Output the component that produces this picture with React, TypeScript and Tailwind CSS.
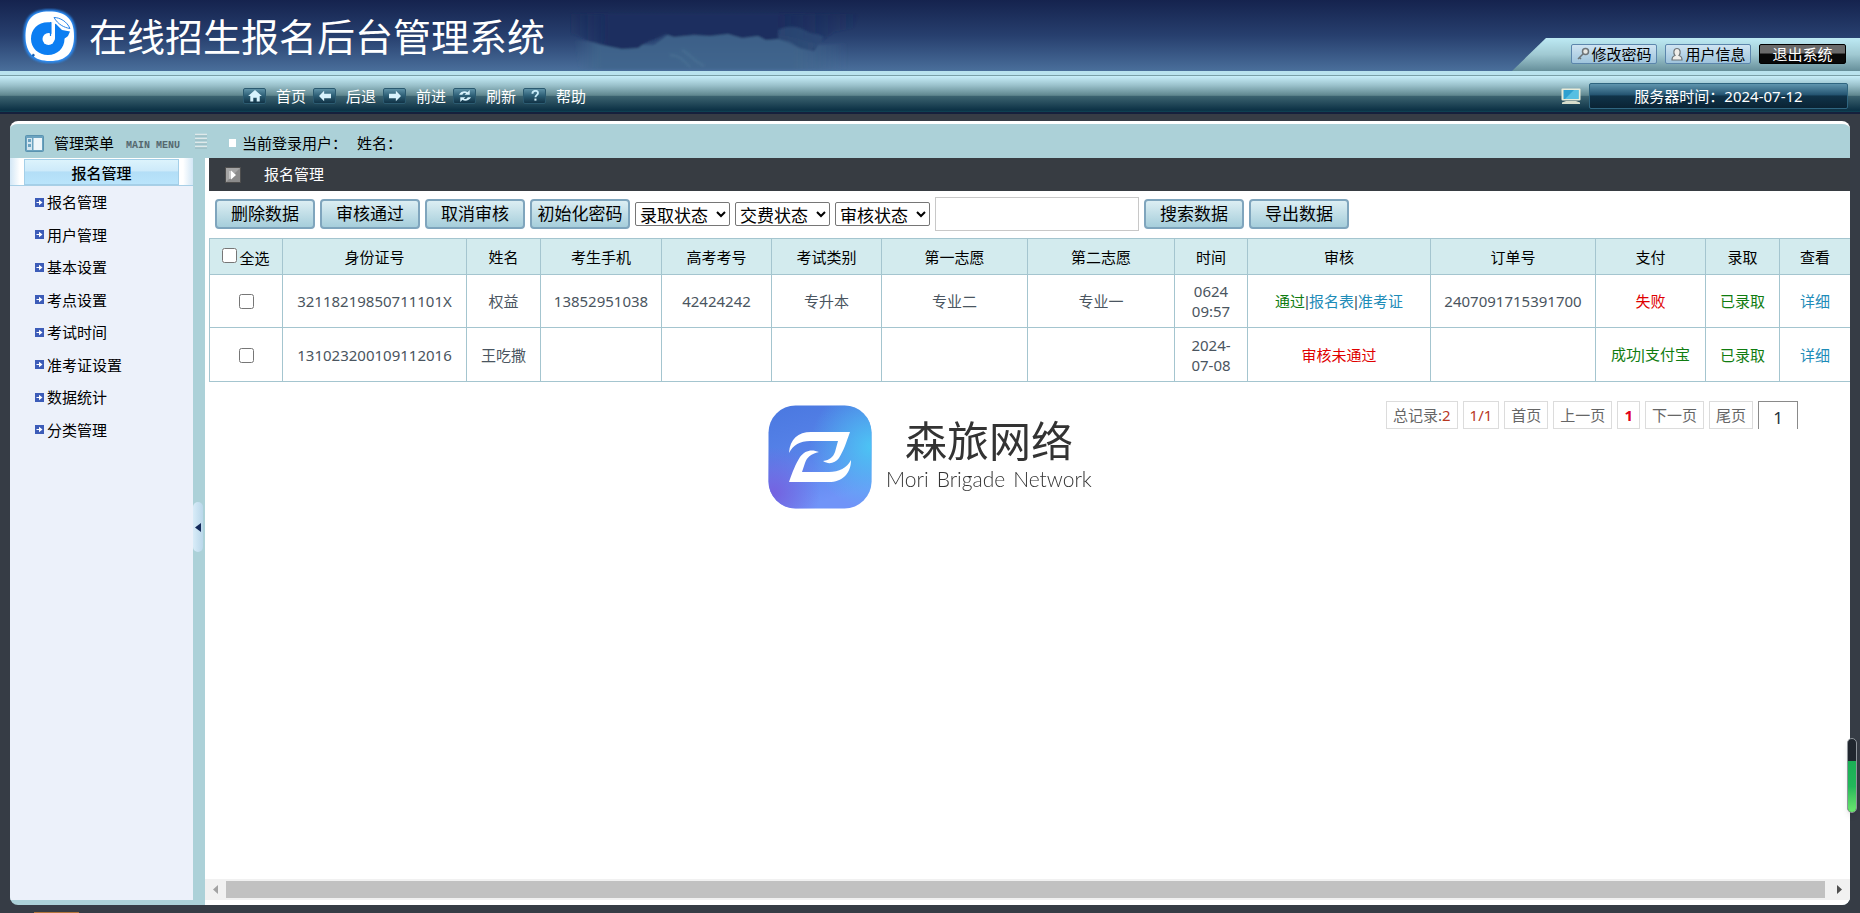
import React from 'react';

const navItems = [
  { label: '首页', icon: 'home' },
  { label: '后退', icon: 'back' },
  { label: '前进', icon: 'forward' },
  { label: '刷新', icon: 'refresh' },
  { label: '帮助', icon: 'help' },
];

const menuItems = ['报名管理', '用户管理', '基本设置', '考点设置', '考试时间', '准考证设置', '数据统计', '分类管理'];

function Logo() {
  return (
    <svg viewBox="0 0 56 56" className="size-14 shrink-0" aria-hidden="true">
      <defs>
        <filter id="logoGlow" x="-10%" y="-10%" width="120%" height="120%">
          <feGaussianBlur stdDeviation="0.8" />
        </filter>
      </defs>
      <path d="M28 1.500C46 1.500 55 9 55 28S46 55 29 55C11 55 2.500 46 2.500 28S10 1.500 28 1.500z" fill="#2a8cf5" filter="url(#logoGlow)" />
      <path d="M28 3.500C45 3.500 53 11 53 28S45 53 29 53C13 53 4.500 45 4.500 28S12 3.500 28 3.500z" fill="#fff" />
      <path d="M30 14.500C18 13 10 20.500 10 31c0 9 7.500 16 17 16s16.500-7 16.500-16c0-1 2-1.500 3.500-3l2-4.500-8-1.500-6-6z" fill="#0c7ef2" />
      <circle cx="27.500" cy="31" r="6" fill="#fff" />
      <path d="M30.500 15h3.500v15a4.500 4.500 0 0 1-3.500 4z" fill="#fff" />
      <path d="M29.500 14v14" stroke="#0c7ef2" strokeWidth="1.200" />
      <path d="M33 9.500c6 0 13 4 16 11-6-1-12-4-16-11z" fill="#fff" stroke="#2a86ea" strokeWidth="1" />
      <path d="M12 45.500l2 1.500-1.500 2-1.800-1.500z" fill="#1160b8" />
    </svg>
  );
}

function Clouds() {
  return (
    <svg viewBox="0 0 300 71" className="absolute left-[570px] top-0 h-[71px] w-[300px]" aria-hidden="true">
      <defs>
        <linearGradient id="cloudLight" x1="0" y1="0" x2="1" y2="0">
          <stop offset="0" stopColor="#41668c" stopOpacity="0" />
          <stop offset="0.100" stopColor="#41668c" stopOpacity="0.850" />
          <stop offset="0.800" stopColor="#41668c" stopOpacity="0.850" />
          <stop offset="1" stopColor="#41668c" stopOpacity="0" />
        </linearGradient>
        <linearGradient id="cloudDark" x1="0" y1="0" x2="1" y2="0">
          <stop offset="0" stopColor="#1b2d5e" stopOpacity="0" />
          <stop offset="0.160" stopColor="#1b2d5e" />
          <stop offset="0.720" stopColor="#1b2d5e" />
          <stop offset="1" stopColor="#1b2d5e" stopOpacity="0" />
        </linearGradient>
        <filter id="cloudSoft" x="-10%" y="-10%" width="120%" height="120%">
          <feGaussianBlur stdDeviation="0.8" />
        </filter>
      </defs>
      <g filter="url(#cloudSoft)">
        <path d="M4 40l20 2 20 3 40 0 16-12h100l20 4 30 8 28-2v26H10z" fill="url(#cloudLight)" />
        <path d="M0 14H290l-6 14-20 4-14 10-6 9-14-3-10-6-12-3-12 1-8-4-16 2-14-4-18 2-16-1-20 2-9-3-8 4-12 5-7 5-16 1-20-4-14-4-12-6-14-4z" fill="url(#cloudDark)" />
        <path d="M208 30c10-5 20-4 28 1 6 4 12 2 18 6-4 6-8 10-12 13-12 0-24-6-34-11z" fill="#35557f" opacity="0.550" />
        <path d="M100 55c10 0 14 6 20 12M112 50c8 4 10 10 22 16" stroke="#527a9d" strokeWidth="2" fill="none" opacity="0.400" />
      </g>
    </svg>
  );
}

function NavIcon({ name }: { name: string }) {
  return (
    <span className="flex h-4 w-[23px] items-center justify-center rounded-xs border border-[#2b5a70] bg-linear-to-b from-[#5f93a8] via-[#2a5c73] to-[#123447]">
      <svg viewBox="0 0 16 14" className="h-3 w-3.5" fill="#d8f2fc" aria-hidden="true">
        {name === 'home' && <path d="M8 0L0 7h2.500v6.500H6V9h4v4.500h3.500V7H16z" />}
        {name === 'back' && <path d="M1 7l6-6v3.500h8v5H7V13z" />}
        {name === 'forward' && <path d="M15 7L9 1v3.500H1v5h8V13z" />}
        {name === 'refresh' && (
          <path d="M1 5.500C3 1.500 8 .5 11 2.500L13.500 0v5.500H7.500l1.800-1.700C7 3 5.500 3.800 5 5.500zM15 8.500c-2 4-7 5-10 3L2.500 14V8.500h6l-1.800 1.700c2.300.8 3.800 0 4.300-1.700z" />
        )}
        {name === 'help' && (
          <g>
            <path d="M5 4.500c0-4.500 6.500-4.500 6.500-1 0 2.500-3 2.500-3 5" fill="none" stroke="#c8ecfa" strokeWidth="2.200" />
            <rect x="7.300" y="10" width="2.400" height="2.400" />
          </g>
        )}
      </svg>
    </span>
  );
}

function Header() {
  return (
    <header>
      <div className="relative flex h-[71px] items-end justify-between bg-linear-to-b from-[#15234e] via-[#273f6e] to-[#4a6f9b]">
        <Clouds />
        <div className="relative flex h-full items-center gap-3 pl-[21px]">
          <Logo />
          <h1 className="text-[38px] leading-none text-white">在线招生报名后台管理系统</h1>
        </div>
        <div className="relative flex">
          <svg viewBox="0 0 34 33" className="h-[33px] w-[34px]" aria-hidden="true">
            <defs>
              <linearGradient id="tab" x1="0" y1="0" x2="0" y2="1">
                <stop offset="0" stopColor="#bdeaf4" />
                <stop offset="0.5" stopColor="#a0c9d2" />
                <stop offset="1" stopColor="#668f9a" />
              </linearGradient>
            </defs>
            <path d="M0 33L34 0v33z" fill="url(#tab)" />
          </svg>
          <div className="flex h-[33px] items-start gap-2 bg-linear-to-b from-[#bdeaf4] via-[#a0c9d2] to-[#668f9a] pl-[25px] pr-3.5 pt-1.5">
            <button className="flex h-5 w-[86px] items-center justify-center gap-px rounded-xs border border-[#5c86ac] bg-linear-to-b from-[#cfe4f2] to-[#9fc4dc] text-[15px] leading-none text-black">
              <svg viewBox="0 0 14 14" className="size-3.5" fill="none" stroke="#6d7478" strokeWidth="1.500" aria-hidden="true">
                <circle cx="9.500" cy="4.500" r="3" fill="#e8e8e4" />
                <path d="M7 7L2 12M3.500 10.500l1.500 1.500" />
              </svg>
              修改密码
            </button>
            <button className="flex h-5 w-[86px] items-center justify-center gap-px rounded-xs border border-[#5c86ac] bg-linear-to-b from-[#cfe4f2] to-[#9fc4dc] text-[15px] leading-none text-black">
              <svg viewBox="0 0 14 14" className="size-3.5" fill="#f0eeea" stroke="#6d7478" strokeWidth="1.200" aria-hidden="true">
                <path d="M2 13c0-3 1-4 3-4.500C3 6 3.500 1.500 7 1.500s4 4.500 2 7c2 .5 3 1.500 3 4.500z" />
              </svg>
              用户信息
            </button>
            <button className="flex h-5 w-[87px] items-center justify-center rounded-xs border border-black bg-linear-to-b from-[#6a6a6a] from-45% to-[#080808] to-50% text-[15px] leading-none text-white">
              退出系统
            </button>
          </div>
        </div>
      </div>
      <div className="h-[5px] border-b border-[#7aa0a8] bg-[#b9e3ee]" />
      <div className="flex h-[38px] items-center justify-between border-b-2 border-[#15203c] bg-[linear-gradient(to_bottom,#c8effa_0%,#9cc3cd_25%,#5f868e_54%,#3d6471_55%,#0c3145_95%,#0f4556_100%)] pl-[243px] pr-3 pt-1">
        <nav className="flex gap-[7px] text-[15px] leading-5 text-white">
          {navItems.map((n) => (
            <a key={n.label} href="#" className="flex items-center gap-2.5">
              <NavIcon name={n.icon} />
              {n.label}
            </a>
          ))}
        </nav>
        <div className="flex items-center gap-2">
          <svg viewBox="0 0 20 16" className="h-4 w-5" aria-hidden="true">
            <rect x="0.500" y="0.500" width="19" height="12" rx="1" fill="#e9ecd9" />
            <rect x="2.500" y="2" width="15" height="9" fill="#2fa0d0" />
            <path d="M4 11l9-9h4.500v9z" fill="#57bfe2" />
            <path d="M5 13h10l4 1.500V16H1v-1.500z" fill="#d7dccb" />
          </svg>
          <div className="flex h-[26px] w-[259px] items-center justify-center rounded-xs border border-[#2f6580] bg-[linear-gradient(to_bottom,#5f95ae_0%,#245471_45%,#103349_50%,#0a2334_100%)] text-[15px] text-white">
            服务器时间：2024-07-12
          </div>
        </div>
      </div>
    </header>
  );
}

function Sidebar() {
  return (
    <aside className="flex w-[183px] shrink-0 flex-col bg-[#ecf1fa]">
      <div className="flex h-7 border-b border-[#a8cfe6] bg-[linear-gradient(to_right,#d3e7f6_0px,#ffffff_10px,#ffffff_173px,#d3e7f6_183px)] px-3.5 pt-px">
        <h2 className="flex-1 border border-[#a4cfe8] bg-[linear-gradient(to_bottom,#dcf3fc_0%,#cdeafa_45%,#b3def7_50%,#b9e4fb_100%)] text-center text-[15px] font-medium leading-[26px] text-black">
          报名管理
        </h2>
      </div>
      <ul className="grid h-[260px] grid-rows-8 pl-[25px] text-[15px] text-black">
        {menuItems.map((m) => (
          <li key={m} className="flex items-center">
            <a href="#" className="flex items-center gap-[3px]">
              <svg viewBox="0 0 9 9" className="size-[9px]" aria-hidden="true">
                <rect width="9" height="9" fill="#3c5cb8" />
                <path d="M1.500 4h2.500V1.800L7.500 4.500 4 7.200V5H1.500z" fill="#fff" />
              </svg>
              {m}
            </a>
          </li>
        ))}
      </ul>
    </aside>
  );
}

function ToolButton({ children }: { children: React.ReactNode }) {
  return (
    <button className="h-[30px] w-[100px] whitespace-nowrap rounded-[4px] border-2 border-[#7fa5bd] bg-linear-to-b from-[#dceef3] to-[#a6cedb] text-[17px] leading-none text-black">
      {children}
    </button>
  );
}

function StatusSelect({ label }: { label: string }) {
  return (
    <select aria-label={label} className="h-6 w-[95px] rounded-xs border border-[#767676] bg-white text-[17px] leading-none text-black">
      <option>{label}</option>
    </select>
  );
}

function Toolbar() {
  return (
    <div className="flex h-[47px] items-center gap-[5px] pb-1.5 pl-1.5 pt-1">
      <ToolButton>删除数据</ToolButton>
      <ToolButton>审核通过</ToolButton>
      <ToolButton>取消审核</ToolButton>
      <ToolButton>初始化密码</ToolButton>
      <StatusSelect label="录取状态" />
      <StatusSelect label="交费状态" />
      <StatusSelect label="审核状态" />
      <input type="text" aria-label="搜索" className="h-[34px] w-[204px] shrink-0 border border-[#c8c8c8] bg-white px-2 text-[15px]" />
      <ToolButton>搜索数据</ToolButton>
      <ToolButton>导出数据</ToolButton>
    </div>
  );
}

const th = 'border border-[#a4c5cf] p-0 text-center font-normal text-black';
const td = 'border border-[#a4c5cf] p-0 text-center';

function Bar() {
  return <span className="font-['Liberation_Sans']">|</span>;
}

function Records() {
  return (
    <table className="w-full table-fixed border-collapse border border-[#a4c5cf] text-[15px] leading-5 text-[#4a5560]">
      <colgroup>
        <col className="w-[73px]" />
        <col className="w-[184px]" />
        <col className="w-[74px]" />
        <col className="w-[121px]" />
        <col className="w-[110px]" />
        <col className="w-[110px]" />
        <col className="w-[146px]" />
        <col className="w-[147px]" />
        <col className="w-[73px]" />
        <col className="w-[183px]" />
        <col className="w-[165px]" />
        <col className="w-[110px]" />
        <col className="w-[74px]" />
        <col className="w-[71px]" />
      </colgroup>
      <thead className="bg-[#d3ebee]">
        <tr className="h-9">
          <th className={th}>
            <label className="inline-flex items-end gap-0.5">
              <input type="checkbox" className="mb-1 size-[15px]" />
              <span className="leading-[18px]">全选</span>
            </label>
          </th>
          {['身份证号', '姓名', '考生手机', '高考考号', '考试类别', '第一志愿', '第二志愿', '时间', '审核', '订单号', '支付', '录取', '查看'].map((h) => (
            <th key={h} className={th}>{h}</th>
          ))}
        </tr>
      </thead>
      <tbody>
        <tr className="h-[53px]">
          <td className={td}><input type="checkbox" aria-label="选择 权益" className="mb-0.5 size-[15px] align-middle" /></td>
          <td className={td}>32118219850711101X</td>
          <td className={td}>权益</td>
          <td className={td}>13852951038</td>
          <td className={td}>42424242</td>
          <td className={td}>专升本</td>
          <td className={td}>专业二</td>
          <td className={td}>专业一</td>
          <td className={td}>0624<br />09:57</td>
          <td className={td}>
            <span className="text-[#107c10]">通过</span><Bar /><a href="#" className="text-[#1e8cb8]">报名表</a><Bar /><a href="#" className="text-[#1e8cb8]">准考证</a>
          </td>
          <td className={td}>2407091715391700</td>
          <td className={td}><span className="text-[#e00000]">失败</span></td>
          <td className={td}><span className="text-[#107c10]">已录取</span></td>
          <td className={td}><a href="#" className="text-[#1e8cb8]">详细</a></td>
        </tr>
        <tr className="h-[54px]">
          <td className={td}><input type="checkbox" aria-label="选择 王吃撒" className="mb-0.5 size-[15px] align-middle" /></td>
          <td className={td}>131023200109112016</td>
          <td className={td}>王吃撒</td>
          <td className={td} />
          <td className={td} />
          <td className={td} />
          <td className={td} />
          <td className={td} />
          <td className={td}>2024-<br />07-08</td>
          <td className={td}><span className="text-[#e00000]">审核未通过</span></td>
          <td className={td} />
          <td className={td}><span className="text-[#107c10]">成功<Bar />支付宝</span></td>
          <td className={td}><span className="text-[#107c10]">已录取</span></td>
          <td className={td}><a href="#" className="text-[#1e8cb8]">详细</a></td>
        </tr>
      </tbody>
    </table>
  );
}

const pageBox = 'flex h-7 items-center border border-[#dcdcdc] px-1.5';

function Pagination() {
  return (
    <nav className="mr-[52px] mt-[19px] flex justify-end gap-[5px] text-[15px] text-[#666]">
      <span className={pageBox}>总记录:<span className="text-[#b8371f]">2</span></span>
      <span className={`${pageBox} text-[#b8371f]`}>1/1</span>
      <a href="#" className={pageBox}>首页</a>
      <a href="#" className={pageBox}>上一页</a>
      <span className={`${pageBox} font-bold text-[#e0001a]`}>1</span>
      <a href="#" className={pageBox}>下一页</a>
      <a href="#" className={pageBox}>尾页</a>
      <input aria-label="页码" defaultValue="1" className="h-7 w-10 border border-b-0 border-[#8a8a8a] pt-1 text-center text-[17px] text-[#24313c]" />
    </nav>
  );
}

function Scrollbar() {
  return (
    <div className="flex h-[21px] items-center justify-between bg-[#f1f1f1] text-[#505050]">
      <svg viewBox="0 0 21 21" className="size-[21px]" aria-hidden="true"><path d="M13 6v9L8 10.500z" fill="#a3a3a3" /></svg>
      <div className="h-[17px] flex-1 bg-[#c1c1c1]" />
      <svg viewBox="0 0 25 21" className="h-[21px] w-[25px]" aria-hidden="true"><path d="M12 6v9l5-4.500z" fill="#505050" /></svg>
    </div>
  );
}

function Watermark() {
  return (
    <div className="pointer-events-none fixed inset-0 flex items-center justify-center gap-3.5">
      <svg viewBox="0 0 104 104" className="size-[104px]" aria-hidden="true">
        <defs>
          <linearGradient id="markBase" x1="0" y1="0" x2="0.3" y2="1">
            <stop offset="0" stopColor="#4a78e0" />
            <stop offset="0.5" stopColor="#5682e8" />
            <stop offset="1" stopColor="#7094f8" />
          </linearGradient>
          <radialGradient id="markCyan" cx="1" cy="0.4" r="0.6">
            <stop offset="0" stopColor="#4cc4f4" />
            <stop offset="1" stopColor="#4cc4f4" stopOpacity="0" />
          </radialGradient>
          <radialGradient id="markViolet" cx="0.050" cy="0.850" r="0.45">
            <stop offset="0" stopColor="#7462e0" />
            <stop offset="1" stopColor="#7462e0" stopOpacity="0" />
          </radialGradient>
        </defs>
        <rect x="0.500" y="0.500" width="103" height="103" rx="27" fill="url(#markBase)" />
        <rect x="0.500" y="0.500" width="103" height="103" rx="27" fill="url(#markCyan)" />
        <rect x="0.500" y="0.500" width="103" height="103" rx="27" fill="url(#markViolet)" />
        <path d="M21 48C22 34 30 27 43 27H82C78 38 76 45 71 53C67 58 61 60 55 56C62 55 65 52 67 47L70 36H42C32 36 25 40 21 48Z" fill="#fff" />
        <path d="M83 55C83 69 74 77 61 77H21C25 66 27 60 32 52C37 45 44 44 51 47C43 49 39 52 37 58L34 67H61C71 67 79 63 83 55Z" fill="#fff" />
      </svg>
      <div className="flex flex-col items-center pb-1 text-[#333]">
        <span className="text-[42px] leading-[48px]">森旅网络</span>
        <span className="flex gap-2 font-[Lato] text-[21px] font-light leading-7">
          <span>Mori</span>
          <span>Brigade</span>
          <span>Network</span>
        </span>
      </div>
    </div>
  );
}

export default function App() {
  return (
    <div className="relative flex min-h-screen flex-col overflow-hidden bg-[#363c45] font-['Noto_Sans','Noto_Sans_CJK_SC',sans-serif] text-[15px]">
      <Header />
      <div className="mx-2.5 mb-2 mt-[7px] flex flex-1 flex-col overflow-hidden rounded-lg border-t-[3px] border-white bg-[#acd1d8]">
        <div className="flex h-[34px] items-center pl-[15px] pt-1 text-[15px] text-black">
          <svg viewBox="0 0 19 17" className="h-[17px] w-[19px]" aria-hidden="true">
            <rect x="0.500" y="0.500" width="18" height="16" rx="1" fill="#6ba3c0" stroke="#5a93b0" />
            <rect x="2" y="3" width="5" height="12" fill="#d3e6f0" />
            <rect x="8.500" y="3" width="8.500" height="12" fill="#eef6fa" />
            <path d="M3 4h3v3H3zM3 9h3v3H3z" fill="#6ba3c0" />
          </svg>
          <span className="ml-2.5">管理菜单</span>
          <span className="ml-3 mt-1 w-[57px] whitespace-nowrap font-['Liberation_Mono'] text-[10px] font-bold text-[#55686f]">MAIN MENU</span>
          <svg viewBox="0 0 12 16" className="-mt-1 ml-3 h-4 w-3" aria-hidden="true">
            <path d="M0 1.500h12M0 5.500h12M0 9.500h12M0 13.500h12" stroke="#dfe9ea" strokeWidth="1.500" />
            <path d="M0 3h12M0 7h12M0 11h12M0 15h12" stroke="#93b4ba" />
          </svg>
          <span className="ml-[22px] h-2 w-[7px] bg-white" />
          <span className="ml-1.5">当前登录用户：</span>
          <span className="ml-2.5">姓名：</span>
        </div>
        <div className="flex flex-1">
          <div className="flex flex-col pb-[5px]">
            <div className="flex flex-1">
              <Sidebar />
              <div className="flex w-3 items-center pb-1">
                <button aria-label="收起菜单" className="flex h-[50px] w-2.5 items-center justify-center rounded-full bg-linear-to-r from-[#d9ecf8] to-[#b9d7ea]">
                  <svg viewBox="0 0 6 9" className="h-[9px] w-1.5" aria-hidden="true"><path d="M6 0v9L0 4.500z" fill="#14295a" /></svg>
                </button>
              </div>
            </div>
          </div>
          <main className="flex min-w-0 flex-1 flex-col bg-white pb-[5px]">
            <div className="ml-1 flex h-[33px] items-center bg-[#373c42] pl-4 text-white">
              <svg viewBox="0 0 16 16" className="size-4" aria-hidden="true">
                <rect width="16" height="16" fill="#8b8b8b" />
                <rect x="0.500" y="0.500" width="15" height="15" fill="none" stroke="#4e4e4e" />
                <path d="M1 1h14L1 15z" fill="#a5a5a5" />
                <path d="M5 4v8" stroke="#e4e4e4" strokeWidth="1" />
                <path d="M6 3.500l5 4.500-5 4.500z" fill="#fff" />
              </svg>
              <h2 className="ml-[23px]">报名管理</h2>
            </div>
            <div className="ml-1 flex-1">
              <Toolbar />
              <Records />
              <Pagination />
            </div>
            <Scrollbar />
          </main>
        </div>
      </div>
      <div className="absolute bottom-0 left-[34px] h-px w-[45px] bg-[#b5753a]" />
      <div className="fixed right-[3px] top-[738px] flex h-[75px] w-2.5 flex-col overflow-hidden rounded-full border border-[#8f959b] bg-[#20262e] pt-[22px] shadow-md">
        <div className="flex-1 bg-linear-to-b from-[#1aae55] via-[#22b85a] to-[#6be86f]" />
      </div>
      <Watermark />
    </div>
  );
}
